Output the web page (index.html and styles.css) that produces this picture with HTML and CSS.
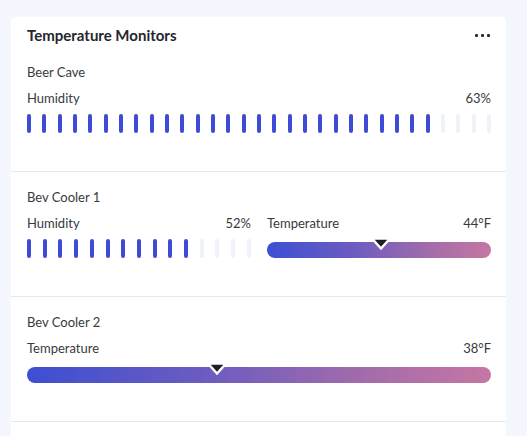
FILE: index.html
```html
<!DOCTYPE html>
<html>
<head>
<meta charset="utf-8">
<link rel="stylesheet" href="styles.css">
</head>
<body>
<div class="page">
  <div class="card">
    <div class="card-header">
      <h2 class="title">Temperature Monitors</h2>
      <div class="more"><span></span><span></span><span></span></div>
    </div>

    <section class="monitor">
      <div class="name">Beer Cave</div>
      <div class="metrics">
        <div class="metric">
          <div class="metric-head"><span>Humidity</span><span>63%</span></div>
          <div class="bars" id="bars1" data-total="31" data-on="27"></div>
        </div>
      </div>
    </section>

    <section class="monitor">
      <div class="name">Bev Cooler 1</div>
      <div class="metrics two">
        <div class="metric">
          <div class="metric-head"><span>Humidity</span><span>52%</span></div>
          <div class="bars" id="bars2" data-total="15" data-on="11"></div>
        </div>
        <div class="metric">
          <div class="metric-head"><span>Temperature</span><span>44°F</span></div>
          <div class="gauge-wrap">
            <div class="gauge">
              <svg class="marker" style="left: calc(50.8% - 11px)" width="22" height="17" viewBox="0 0 22 17"><polygon points="2,1.5 20,1.5 11,11.5" fill="#1c1e23" stroke="#fff" stroke-width="2.5" stroke-linejoin="miter"/></svg>
            </div>
          </div>
        </div>
      </div>
    </section>

    <section class="monitor">
      <div class="name">Bev Cooler 2</div>
      <div class="metrics">
        <div class="metric">
          <div class="metric-head"><span>Temperature</span><span>38°F</span></div>
          <div class="gauge-wrap">
            <div class="gauge">
              <svg class="marker" style="left: calc(41% - 11px)" width="22" height="17" viewBox="0 0 22 17"><polygon points="2,1.5 20,1.5 11,11.5" fill="#1c1e23" stroke="#fff" stroke-width="2.5" stroke-linejoin="miter"/></svg>
            </div>
          </div>
        </div>
      </div>
    </section>
  </div>
</div>
<script>
document.querySelectorAll('.bars').forEach(function (el) {
  var total = +el.dataset.total, on = +el.dataset.on;
  for (var i = 0; i < total; i++) {
    var b = document.createElement('span');
    b.className = 'bar' + (i < on ? ' on' : '');
    el.appendChild(b);
  }
});
</script>
</body>
</html>
```

FILE: styles.css
```css
html, body {
  margin: 0;
  padding: 0;
}
body {
  background: #f4f7fe;
  font-family: Lato, "Noto Sans", sans-serif;
  color: #383a40;
}
.page {
  padding: 17px 21px 0 11px;
}
.card {
  background: #fff;
  border-radius: 4px 4px 0 0;
  min-height: 430px;
}
.card-header {
  display: flex;
  align-items: center;
  justify-content: space-between;
  padding: 8px 16px 2px 16px;
  height: 20px;
}
.title {
  margin: 0;
  font-size: 15px;
  font-weight: 700;
  line-height: 20px;
  color: #25272c;
}
.more {
  display: flex;
  gap: 3px;
}
.more span {
  width: 3px;
  height: 3px;
  border-radius: 1px;
  background: #2a2c33;
}
.monitor {
  padding: 16px 15px 38px 16px;
  border-bottom: 1px solid #e6e8ec;
}
.name {
  font-size: 13px;
  line-height: 18px;
}
.metrics {
  margin-top: 8px;
  display: grid;
  grid-template-columns: 1fr;
}
.metrics.two {
  grid-template-columns: 1fr 1fr;
  column-gap: 16px;
}
.metric-head {
  display: flex;
  justify-content: space-between;
  font-size: 13px;
  line-height: 18px;
}
.bars {
  margin-top: 7px;
  height: 19px;
  display: flex;
  justify-content: space-between;
}
.bar {
  width: 4px;
  height: 19px;
  border-radius: 2px;
  background: #eef2f9;
}
.bar.on {
  background: #3e4bd6;
}
.gauge-wrap {
  margin-top: 7px;
  height: 19px;
  display: flex;
  align-items: flex-end;
}
.gauge {
  position: relative;
  width: 100%;
  height: 16px;
  border-radius: 8px;
  background: linear-gradient(90deg, #3d4fd2 0%, #6e5cc0 40%, #a66da9 75%, #c676a3 100%);
}
.marker {
  position: absolute;
  top: -5px;
  display: block;
}
```
